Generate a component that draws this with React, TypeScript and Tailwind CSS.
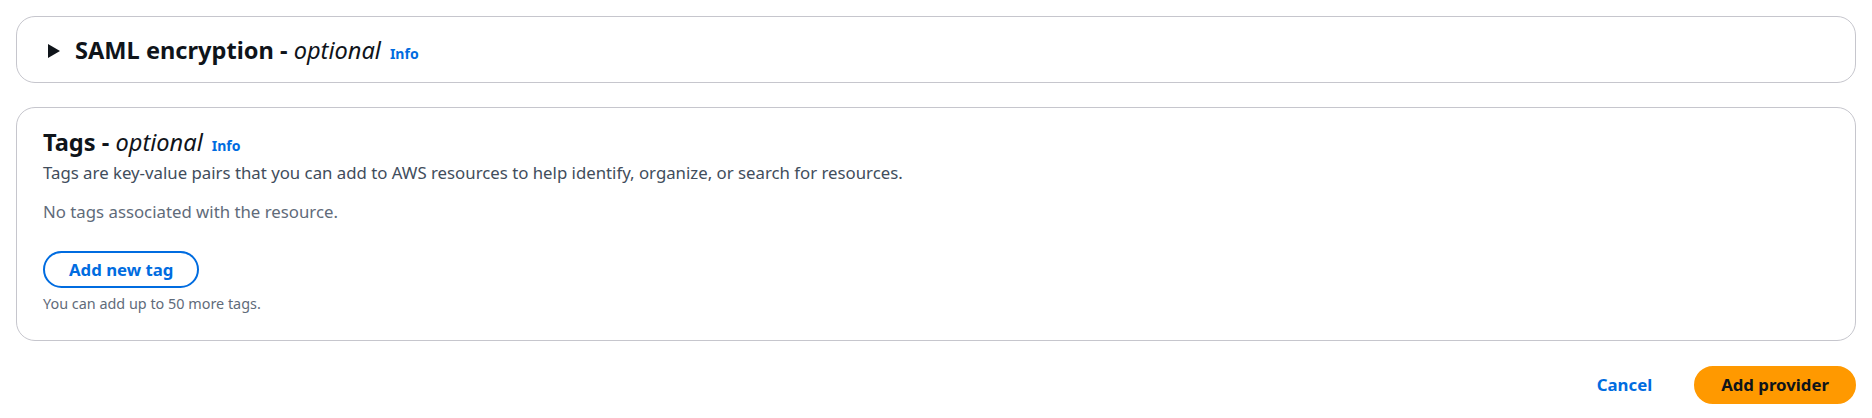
import React from "react";

function InfoLink() {
  return (
    <a
      href="#"
      className="ml-[9px] text-[14px] font-bold leading-[19px] text-[#006ce0] no-underline"
    >
      Info
    </a>
  );
}

function CaretRight() {
  return (
    <svg width="14" height="16" viewBox="0 0 14 16" className="shrink-0" aria-hidden="true">
      <polygon points="1,1 13,8 1,15" fill="#0f141a" />
    </svg>
  );
}

export default function App() {
  return (
    <div className="min-h-[418px] w-full bg-white px-4 pt-4 font-['Noto_Sans',sans-serif] text-[#0f141a]">
      {/* Collapsed expandable section */}
      <section className="rounded-[19px] border border-[#c6c6cd] bg-white pb-[17px] pl-[30px] pr-6 pt-[19px]">
        <div className="flex items-center">
          <CaretRight />
          <h2 className="ml-[14px] flex items-baseline text-[23.6px] leading-[29px]">
            <span className="font-bold">SAML encryption -&nbsp;</span>
            <span className="font-normal italic">optional</span>
            <InfoLink />
          </h2>
        </div>
      </section>

      {/* Tags container */}
      <section className="mt-[24px] rounded-[19px] border border-[#c6c6cd] bg-white px-[26px] pb-[27px] pt-[20px]">
        <h2 className="flex items-baseline text-[23.6px] leading-[29px]">
          <span className="font-bold">Tags -&nbsp;</span>
          <span className="font-normal italic">optional</span>
          <InfoLink />
        </h2>
        <p className="mt-[4px] text-[16.8px] leading-[24px] text-[#414d5c]">
          Tags are key-value pairs that you can add to AWS resources to help identify, organize, or search for resources.
        </p>
        <p className="mt-[15px] text-[16.8px] leading-[24px] text-[#5f6b7a]">
          No tags associated with the resource.
        </p>
        <button
          type="button"
          className="mt-[27px] h-[37px] rounded-full border-2 border-[#006ce0] bg-white px-[24px] text-[16.8px] font-bold leading-[20px] text-[#006ce0]"
        >
          Add new tag
        </button>
        <p className="mt-[6px] text-[14.4px] leading-[19px] text-[#5f6b7a]">
          You can add up to 50 more tags.
        </p>
      </section>

      {/* Form actions */}
      <div className="mt-[25px] flex items-center justify-end gap-[16px]">
        <button
          type="button"
          className="h-[38px] rounded-full border-2 border-transparent px-[24px] text-[16.8px] font-bold leading-[20px] text-[#006ce0]"
        >
          Cancel
        </button>
        <button
          type="button"
          className="h-[38px] rounded-full border-2 border-[#ff9900] bg-[#ff9900] px-[25px] text-[16.8px] font-bold leading-[20px] text-[#0f141a]"
        >
          Add provider
        </button>
      </div>
    </div>
  );
}
